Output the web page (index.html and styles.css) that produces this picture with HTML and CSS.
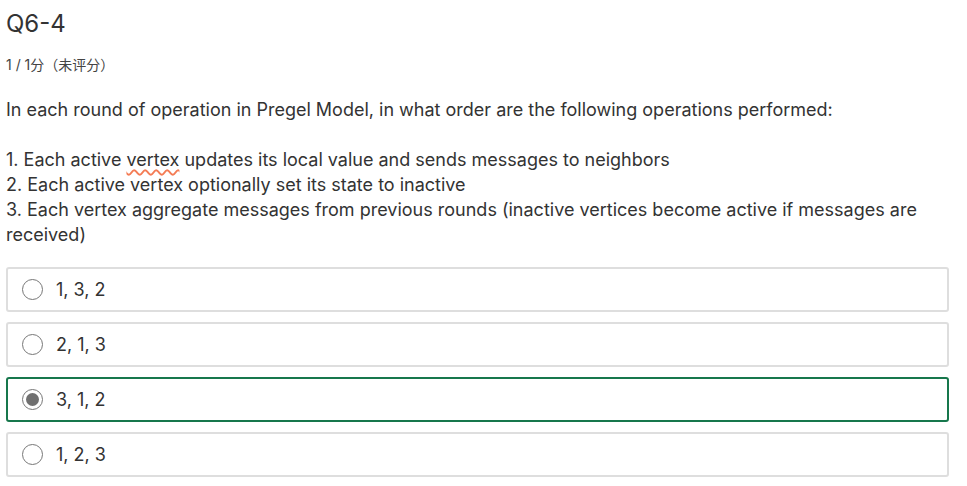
FILE: index.html
```html
<!DOCTYPE html>
<html lang="zh">
<head>
<meta charset="utf-8">
<link rel="stylesheet" href="styles.css">
</head>
<body>
<div class="page">
  <h2 class="title">Q6-4</h2>
  <div class="score">1 / 1分（未评分）</div>
  <div class="question">
    <p class="lead">In each round of operation in Pregel Model, in what order are the following operations performed:</p>
    <p class="list">1. Each active <span class="spell">vertex</span> updates its local value and sends messages to neighbors<br>2. Each active vertex optionally set its state to inactive<br>3. Each vertex aggregate messages from previous rounds (inactive vertices become active if messages are received)</p>
  </div>
  <div class="options">
    <label class="option"><span class="radio"></span><span class="opt-text">1, 3, 2</span></label>
    <label class="option"><span class="radio"></span><span class="opt-text">2, 1, 3</span></label>
    <label class="option selected"><span class="radio checked"></span><span class="opt-text">3, 1, 2</span></label>
    <label class="option"><span class="radio"></span><span class="opt-text">1, 2, 3</span></label>
  </div>
</div>
</body>
</html>
```

FILE: styles.css
```css
* { box-sizing: border-box; }
html, body { margin: 0; padding: 0; background: #fff; }
body {
  font-family: Inter, "Noto Sans", "Noto Sans CJK SC", sans-serif;
  color: #333;
}
.page {
  width: 949px;
  padding: 0 0 0 6px;
}
.title {
  margin: 0;
  padding-top: 9px;
  font-size: 24px;
  line-height: 30px;
  font-weight: 400;
  color: #333;
}
.score {
  margin-top: 17px;
  font-size: 14px;
  line-height: 18px;
  color: #444;
}
.question {
  margin-top: 23px;
  font-size: 18px;
  line-height: 25px;
  color: #333;
}
.question p { margin: 0; }
.lead { margin-bottom: 25px !important; }
.spell {
  text-decoration: underline wavy #f47c55;
  text-decoration-thickness: 1.5px;
  text-underline-offset: 3px;
}
.options {
  margin-top: 20px;
  display: flex;
  flex-direction: column;
  gap: 10px;
}
.option {
  display: flex;
  align-items: center;
  height: 45px;
  border: 2px solid #dedede;
  border-radius: 3px;
  padding-left: 14px;
  font-size: 18px;
  color: #333;
}
.option.selected { border-color: #17774c; }
.radio {
  width: 21px;
  height: 21px;
  border: 1px solid #777;
  border-radius: 50%;
  margin-right: 13px;
  position: relative;
  flex: none;
}
.radio.checked::after {
  content: "";
  position: absolute;
  left: 3px;
  top: 3px;
  width: 13px;
  height: 13px;
  border-radius: 50%;
  background: #707070;
}
```
